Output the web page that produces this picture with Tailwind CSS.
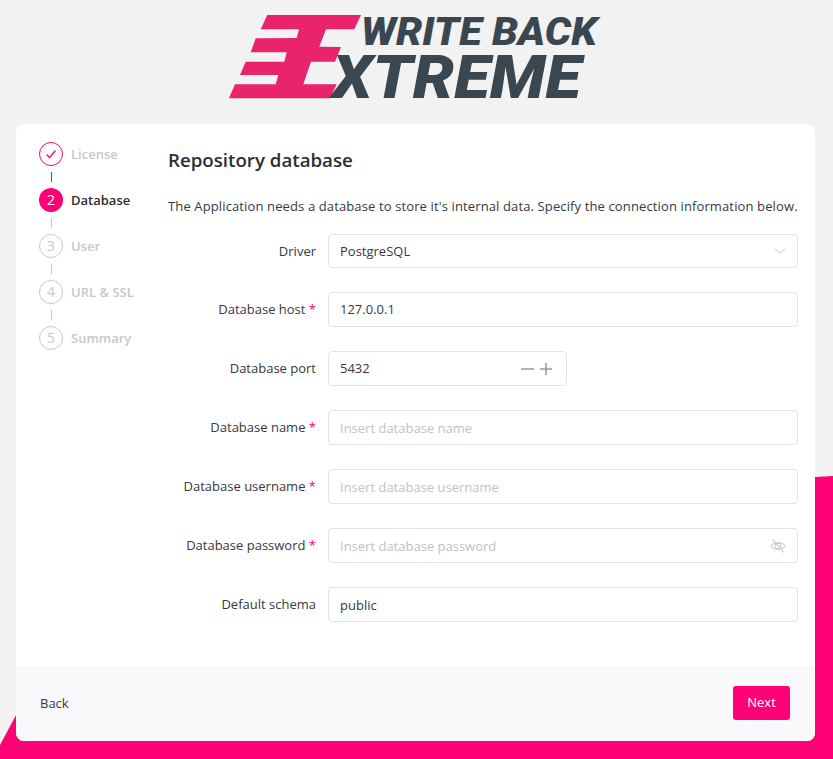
<!doctype html>
<html><head><script src="https://cdn.jsdelivr.net/npm/@tailwindcss/browser@4"></script></head>
<body class="m-0">
<div class="relative w-[833px] h-[759px] overflow-hidden bg-[#f2f2f2] font-['Open_Sans','Noto_Sans',sans-serif] text-[13px] text-[#36393f]">
  <svg class="absolute inset-0" width="833" height="759" viewBox="0 0 833 759"><polygon points="0,745 15,717 30,690 815,477 833,476 833,759 0,759" fill="#ff0076"/></svg>
  <div class="relative flex flex-col h-full">
    <svg class="shrink-0 mt-[13px] ml-[220px] overflow-visible" width="400" height="88" viewBox="220 13 400 88">
      <polygon points="267.3,15 361,15 354.3,29.3 326,29.3 319.3,46.7 341,47 335,61.7 311,61.7 303.3,84.3 336.7,84.3 330,98.3 229,98.3 235,84.3 275.7,84.3 278.3,75 240,75 245.7,61.7 284.3,61.7 286.7,52.3 250.7,52.3 255.7,38.3 296.7,38 299,29.3 260.7,29.3" fill="#e9236c"/>
      <text x="361" y="45" font-family="Roboto" font-weight="900" font-style="italic" font-size="39" textLength="236" lengthAdjust="spacingAndGlyphs" fill="#3a4750">WRITE BACK</text>
      <text x="332" y="98" font-family="Roboto" font-weight="900" font-style="italic" font-size="60" textLength="249" lengthAdjust="spacingAndGlyphs" fill="#3a4750">XTREME</text>
    </svg>
    <div class="mt-[23px] ml-[16px] w-[799px] h-[617px] flex flex-col bg-white rounded-lg overflow-hidden">
      <div class="flex-1 flex">
        <div class="w-[152px] pl-[23px] pt-[18px] shrink-0">
          <div class="flex items-center gap-2 h-6"><span class="w-6 h-6 rounded-full border border-[#ff0076] flex items-center justify-center"><svg width="14" height="14" viewBox="0 0 14 14" fill="none" stroke="#ff0076" stroke-width="1.2"><path d="M2.5 7.5 5.5 10.5 11.5 3.5"/></svg></span><span class="font-semibold text-[#c8c8c8] pt-[2px]">License</span></div>
          <div class="w-px h-[10px] bg-[#ff0076] ml-3 my-[6px]"></div>
          <div class="flex items-center gap-2 h-6"><span class="w-6 h-6 rounded-full bg-[#ff0076] text-white flex items-center justify-center text-sm">2</span><span class="font-semibold text-[#2b2e33] pt-[2px]">Database</span></div>
          <div class="w-px h-[10px] bg-[#c8c8c8] ml-3 my-[6px]"></div>
          <div class="flex items-center gap-2 h-6"><span class="w-6 h-6 rounded-full border border-[#c8c8c8] text-[#c8c8c8] flex items-center justify-center text-sm">3</span><span class="font-semibold text-[#c8c8c8] pt-[2px]">User</span></div>
          <div class="w-px h-[10px] bg-[#c8c8c8] ml-3 my-[6px]"></div>
          <div class="flex items-center gap-2 h-6"><span class="w-6 h-6 rounded-full border border-[#c8c8c8] text-[#c8c8c8] flex items-center justify-center text-sm">4</span><span class="font-semibold text-[#c8c8c8] pt-[2px]">URL &amp; SSL</span></div>
          <div class="w-px h-[10px] bg-[#c8c8c8] ml-3 my-[6px]"></div>
          <div class="flex items-center gap-2 h-6"><span class="w-6 h-6 rounded-full border border-[#c8c8c8] text-[#c8c8c8] flex items-center justify-center text-sm">5</span><span class="font-semibold text-[#c8c8c8] pt-[2px]">Summary</span></div>
        </div>
        <div class="flex-1 pr-[17px]">
          <h1 class="mt-[22px] text-[18.7px] leading-[27px] font-semibold text-[#2b2e33]">Repository database</h1>
          <p class="mt-[23px] leading-[20px] whitespace-nowrap tracking-[0.125px]">The Application needs a database to store it's internal data. Specify the connection information below.</p>
          <div class="mt-[18px] flex flex-col gap-[24px]">
            <div class="flex items-center h-[34px]"><label class="w-[148px] text-right pt-[2px]">Driver</label><div class="ml-3 flex-1 h-[34px] border border-[#e2e2ea] rounded flex items-center justify-between px-[11px]"><span class="pt-[2px]">PostgreSQL</span><svg width="12" height="8" viewBox="0 0 12 8" fill="none" stroke="#c8c8c8"><path d="M1 1.5 6 6.5 11 1.5"/></svg></div></div>
            <div class="flex items-center h-[35px]"><label class="w-[148px] text-right">Database host <span class="text-[#ff0076]">*</span></label><div class="ml-3 flex-1 h-[35px] border border-[#e2e2ea] rounded flex items-center px-[11px]">127.0.0.1</div></div>
            <div class="flex items-center h-[35px]"><label class="w-[148px] text-right">Database port</label><div class="ml-3 w-[239px] h-[35px] border border-[#e2e2ea] rounded flex items-center justify-between pl-[11px] pr-[14px]"><span>5432</span><svg width="31" height="12" viewBox="0 0 31 12" fill="none" stroke="#999" stroke-width="1.6"><path d="M0 6H13M19 6H31M25 0V12"/></svg></div></div>
            <div class="flex items-center h-[35px]"><label class="w-[148px] text-right">Database name <span class="text-[#ff0076]">*</span></label><div class="ml-3 flex-1 h-[35px] border border-[#e2e2ea] rounded flex items-center px-[11px] text-[#c2c2c2]"><span class="pt-[2px]">Insert database name</span></div></div>
            <div class="flex items-center h-[35px]"><label class="w-[148px] text-right">Database username <span class="text-[#ff0076]">*</span></label><div class="ml-3 flex-1 h-[35px] border border-[#e2e2ea] rounded flex items-center px-[11px] text-[#c2c2c2]"><span class="pt-[2px]">Insert database username</span></div></div>
            <div class="flex items-center h-[35px]"><label class="w-[148px] text-right">Database password <span class="text-[#ff0076]">*</span></label><div class="ml-3 flex-1 h-[35px] border border-[#e2e2ea] rounded flex items-center justify-between px-[11px] text-[#c2c2c2]"><span class="pt-[2px]">Insert database password</span><svg width="16" height="14" viewBox="0 0 16 14" fill="none" stroke="#d0d0d0" stroke-width="1.2"><path d="M1 7C4 2.5 12 2.5 15 7 12 11.5 4 11.5 1 7Z"/><circle cx="8" cy="7" r="2.8"/><path d="M2.5 .5 14 13.5"/></svg></div></div>
            <div class="flex items-center h-[35px]"><label class="w-[148px] text-right">Default schema</label><div class="ml-3 flex-1 h-[35px] border border-[#e2e2ea] rounded flex items-center px-[11px]"><span class="pt-[2px]">public</span></div></div>
          </div>
        </div>
      </div>
      <div class="h-[75px] bg-[#f9f9fb] flex items-center justify-between pl-[24px] pr-[25px] shrink-0">
        <span>Back</span>
        <span class="w-[57px] h-[34px] mb-[2px] rounded-[3px] bg-[#ff0076] text-white flex items-center justify-center">Next</span>
      </div>
    </div>
  </div>
</div>
</body></html>
